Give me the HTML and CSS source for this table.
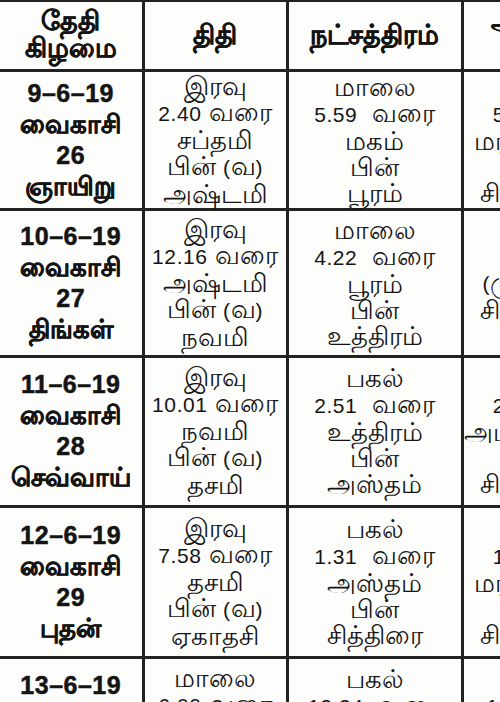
FILE: index.html
```html
<!DOCTYPE html>
<html lang="ta">
<head>
<meta charset="utf-8">
<title>பஞ்சாங்கம்</title>
<link rel="stylesheet" href="styles.css">
</head>
<body>
<div class="sheet">
<table class="cal">
  <colgroup>
    <col class="c1"><col class="c2"><col class="c3"><col class="c4">
  </colgroup>
  <thead>
    <tr class="head">
      <th>தேதி<br>கிழமை</th>
      <th>திதி</th>
      <th>நட்சத்திரம்</th>
      <th>அமிர்தாதி<br>யோகம்</th>
    </tr>
  </thead>
  <tbody>
    <tr class="r1">
      <td class="date"><span class="dn">9–6–19</span><br>வைகாசி<br><span class="dn">26</span><br>ஞாயிறு</td>
      <td>இரவு<br><span class="n">2.40</span> வரை<br>சப்தமி<br>பின் <span class="n">(</span>வ<span class="n">)</span><br>அஷ்டமி</td>
      <td>மாலை<br><span class="n">5.59</span> &nbsp;வரை<br>மகம்<br>பின்<br>பூரம்</td>
      <td>மாலை<br><span class="n">5.59</span> &nbsp;வரை<br>மரணயோகம்<br>பின்<br>சித்தயோகம்</td>
    </tr>
    <tr class="r2">
      <td class="date"><span class="dn">10–6–19</span><br>வைகாசி<br><span class="dn">27</span><br>திங்கள்</td>
      <td>இரவு<br><span class="n">12.16</span> வரை<br>அஷ்டமி<br>பின் <span class="n">(</span>வ<span class="n">)</span><br>நவமி</td>
      <td>மாலை<br><span class="n">4.22</span> &nbsp;வரை<br>பூரம்<br>பின்<br>உத்திரம்</td>
      <td>நாள்<br><span class="n">(</span>முழுவதும்<span class="n">)</span><br>சித்தயோகம்</td>
    </tr>
    <tr class="r3">
      <td class="date"><span class="dn">11–6–19</span><br>வைகாசி<br><span class="dn">28</span><br>செவ்வாய்</td>
      <td>இரவு<br><span class="n">10.01</span> வரை<br>நவமி<br>பின் <span class="n">(</span>வ<span class="n">)</span><br>தசமி</td>
      <td>பகல்<br><span class="n">2.51</span> &nbsp;வரை<br>உத்திரம்<br>பின்<br>அஸ்தம்</td>
      <td>பகல்<br><span class="n">2.51</span> &nbsp;வரை<br>அமிர்தயோகம்<br>பின்<br>சித்தயோகம்</td>
    </tr>
    <tr class="r4">
      <td class="date"><span class="dn">12–6–19</span><br>வைகாசி<br><span class="dn">29</span><br>புதன்</td>
      <td>இரவு<br><span class="n">7.58</span> வரை<br>தசமி<br>பின் <span class="n">(</span>வ<span class="n">)</span><br>ஏகாதசி</td>
      <td>பகல்<br><span class="n">1.31</span> &nbsp;வரை<br>அஸ்தம்<br>பின்<br>சித்திரை</td>
      <td>பகல்<br><span class="n">1.31</span> &nbsp;வரை<br>மரணயோகம்<br>பின்<br>சித்தயோகம்</td>
    </tr>
    <tr class="r5">
      <td class="date"><span class="dn">13–6–19</span><br>வைகாசி<br><span class="dn">30</span><br>வியாழன்</td>
      <td>மாலை<br><span class="n">6.00</span> வரை<br>ஏகாதசி<br>பின் <span class="n">(</span>வ<span class="n">)</span><br>துவாதசி</td>
      <td>பகல்<br><span class="n">12.34</span> &nbsp;வரை<br>சித்திரை<br>பின்<br>சுவாதி</td>
      <td>பகல்<br><span class="n">12.34</span> &nbsp;வரை<br>சித்தயோகம்<br>பின்<br>அமிர்தயோகம்</td>
    </tr>
  </tbody>
</table>
</div>
</body>
</html>
```

FILE: styles.css
```css
html, body {
  margin: 0;
  padding: 0;
  overflow: hidden;
  background: #fdfdfb;
}
.sheet {
  width: 650px;
}
.cal {
  border-collapse: collapse;
  table-layout: fixed;
  width: 644px;
  font-family: "Liberation Sans", "Noto Sans", sans-serif;
  color: #141414;
}
.c1 { width: 143px; }
.c2 { width: 144px; }
.c3 { width: 175px; }
.c4 { width: 182px; }
.cal th, .cal td {
  border: 3px solid #222;
  text-align: center;
  vertical-align: middle;
  padding: 0;
  white-space: nowrap;
}
.cal tr > :first-child { border-left: none; }
.cal thead th { border-top: 2px solid #222; }
.cal th {
  font-weight: bold;
  font-size: 27px;
  line-height: 27px;
  -webkit-text-stroke: 0.4px #141414;
}
.cal td {
  font-size: 26px;
  line-height: 26px;
}
.cal td .n {
  font-size: 21px;
  letter-spacing: 0.6px;
}
.cal td.date {
  font-weight: bold;
  font-size: 26px;
  line-height: 31px;
  -webkit-text-stroke: 0.5px #141414;
}
.cal td.date .dn {
  font-size: 25px;
  letter-spacing: 0.5px;
}
.head { height: 69px; }
.r1 { height: 139px; }
.r2 { height: 147px; }
.r3 { height: 150px; }
.r4 { height: 151px; }
.r5 { height: 150px; }
```
